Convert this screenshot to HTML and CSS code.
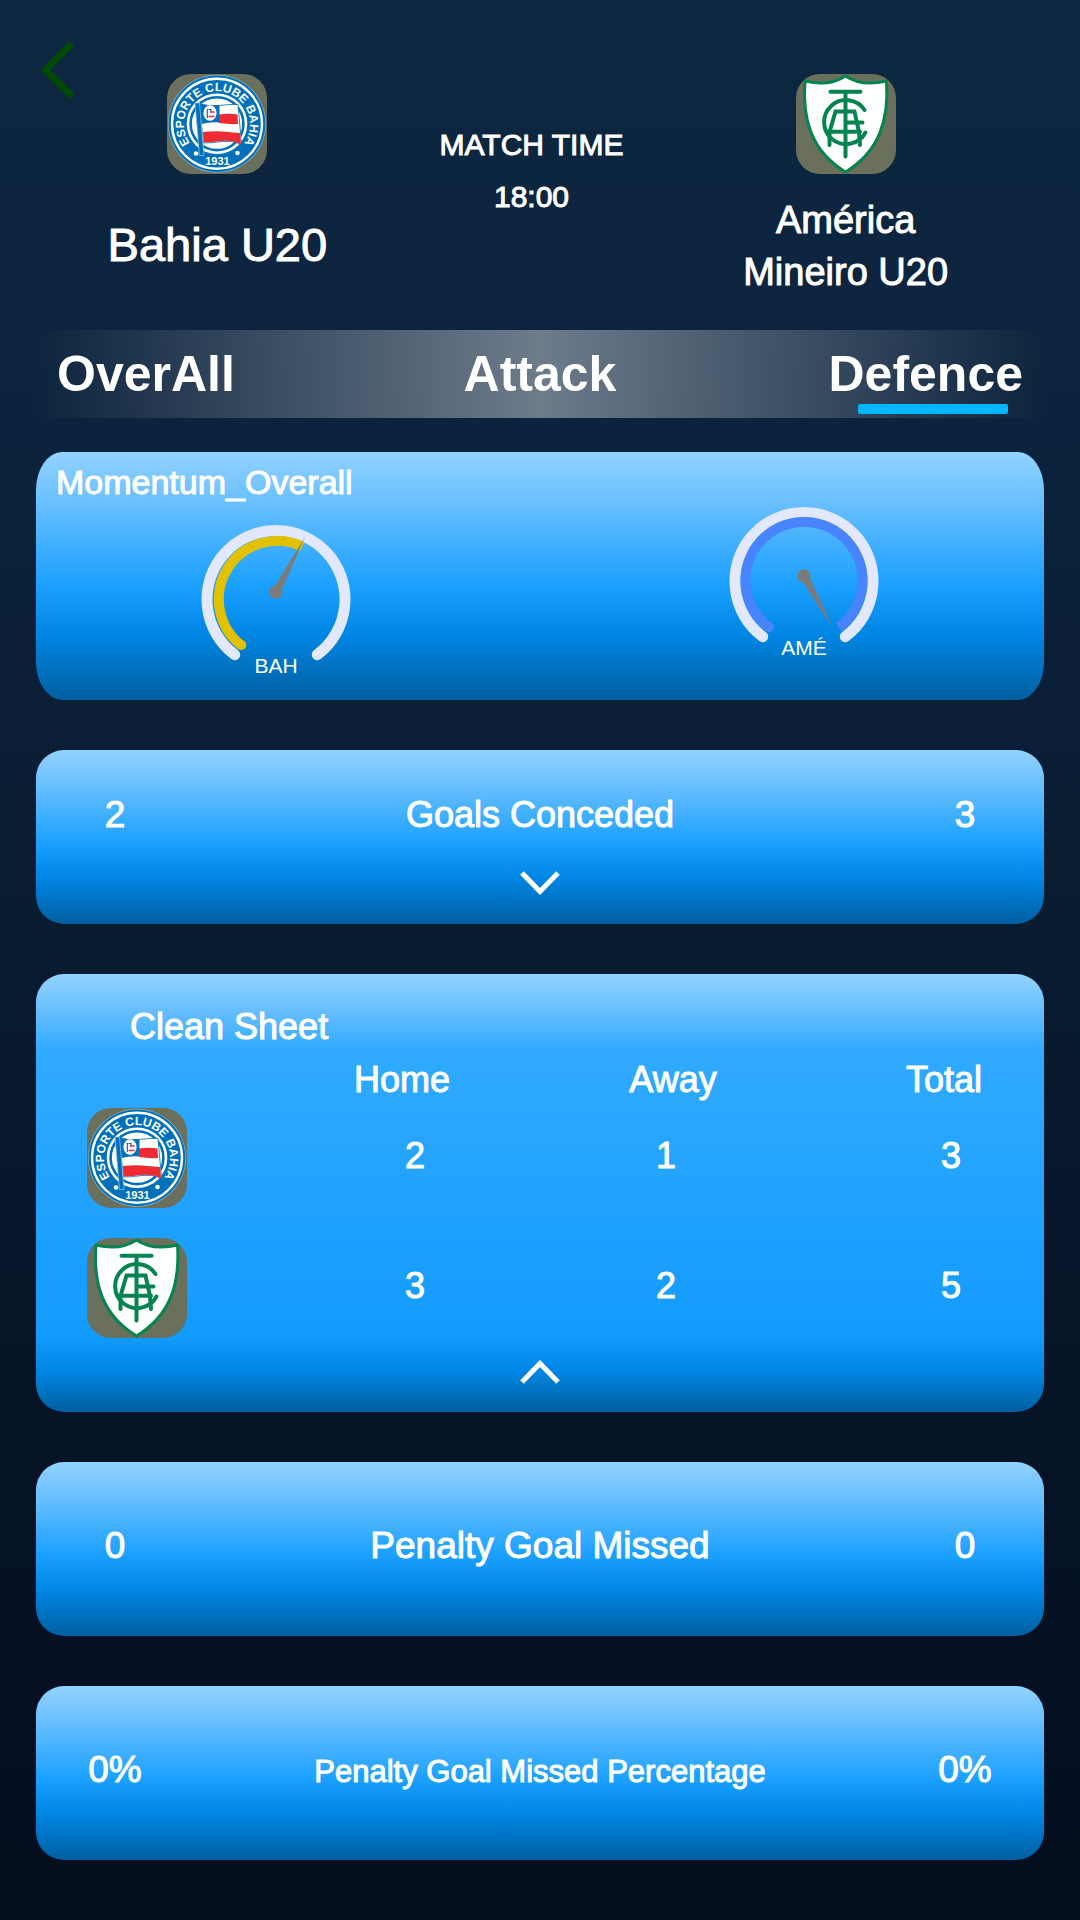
FILE: index.html
```html
<!DOCTYPE html>
<html lang="en">
<head>
<meta charset="utf-8">
<meta name="viewport" content="width=device-width, initial-scale=1">
<title>Bahia U20 – América Mineiro U20</title>
<link rel="stylesheet" href="styles.css">
</head>
<body>
<header class="match">
  <button class="back" type="button" aria-label="Back">
    <svg viewBox="0 0 40 60"><path d="M36 3.500L9.500 30L36 56.500"/></svg>
  </button>
  <div class="team">
    <svg class="crest" viewBox="0 0 100 100" role="img" aria-label="Bahia crest">
      <g id="crest-bahia">
        <path id="motto" d="M20.700 69.500A35 35 0 1 1 79.300 69.500" fill="none"/>
        <circle cx="50" cy="49.700" r="49" fill="#8fb2c6"/>
        <circle cx="50" cy="49.700" r="48.300" fill="#0070bb"/>
        <circle cx="50" cy="49.700" r="45" fill="none" stroke="#fff" stroke-width="2.400"/>
        <circle cx="50" cy="49.700" r="30.300" fill="#fff"/>
        <circle cx="50" cy="49.700" r="26.400" fill="none" stroke="#0070bb" stroke-width="2.600"/>
        <path id="motto-baseline" d="M23 69.200A33 33 0 1 1 77 69.200" fill="none"/>
        <text class="crest-text" font-size="12" text-anchor="middle"><textPath href="#motto-baseline" startOffset="50%">ESPORTE CLUBE BAHIA</textPath></text>
        <text class="crest-text" font-size="11" x="50.500" y="90.500" text-anchor="middle">1931</text>
        <circle cx="29" cy="79.500" r="2.300" fill="#fff"/>
        <circle cx="70.500" cy="79" r="2.300" fill="#fff"/>
        <path d="M32 29.500Q42 33 52 31.500T71 30.500L74.500 70Q64 66 55 67.500T36.500 69Z" fill="#fff" stroke="#0070bb" stroke-width=".8"/>
        <path d="M52 40.500Q62 39 70.500 40.500L71 50Q62 50.500 52 49Z" fill="#ee2b33"/>
        <path d="M36 58Q47 57 55 57.500T73 59L74 70Q64 66 55 67T36.500 68.500Z" fill="#ee2b33"/>
        <path d="M32 29.500Q42 32.500 52.500 31V48.500Q44 47.500 34.500 50Z" fill="#0070bb"/>
        <ellipse cx="43" cy="39" rx="6.600" ry="7.800" fill="#fff"/>
        <path d="M40.300 35v9M41.500 35.500h2.500v3" fill="none" stroke="#0070bb" stroke-width="1.200"/>
        <path d="M43 38h4.500M41.500 42.500h6" stroke="#ee2b33" stroke-width="1.700"/>
        <path d="M28 29h4.500l4.500 52.500h-4.500Z" fill="#0070bb" stroke="#9cc6e2" stroke-width=".7"/>
      </g>
    </svg>
    <h1 class="team-name team-name-large">Bahia U20</h1>
  </div>
  <div class="kickoff">
    <p>MATCH TIME</p>
    <p>18:00</p>
  </div>
  <div class="team">
    <svg class="crest" viewBox="0 0 100 100" role="img" aria-label="América Mineiro crest">
      <g id="crest-america">
        <path d="M49.500 2Q33 13 9 7C6 45 15 77 49.500 98C84 77 93 45 90.500 7Q66 13 49.500 2Z" fill="#fff" stroke="#04854f" stroke-width="3"/>
        <g fill="none" stroke="#04854f" stroke-width="4" stroke-linecap="round">
          <path d="M34.500 17.800H64.500M49.500 17.800V82.500M49.500 48.500H66.500M34 57.800H64"/>
          <path d="M68.500 36A22 22 0 1 0 69.500 58.500"/>
          <path d="M33.500 71V58L39.500 37.500H58.500L63 58L64 71"/>
        </g>
      </g>
    </svg>
    <h1 class="team-name">América<br>Mineiro U20</h1>
  </div>
</header>

<nav class="tabs">
  <button class="tab" type="button">OverAll</button>
  <button class="tab" type="button">Attack</button>
  <button class="tab tab-active" type="button">Defence</button>
</nav>

<main class="cards">
  <section class="card card-momentum">
    <h2 class="momentum-title">Momentum_Overall</h2>
    <div class="gauges">
      <figure class="gauge gauge-home">
        <svg viewBox="0 0 150 130">
          <linearGradient id="needle-home" gradientUnits="userSpaceOnUse" x1="75" y1="68" x2="105" y2="12">
            <stop offset=".7" stop-color="#7b7b7b"/><stop offset="1" stop-color="#7b7b7b" stop-opacity=".3"/>
          </linearGradient>
          <path class="track" d="M33.700 130.700A69 69 0 1 1 116.300 130.700"/>
          <path class="level" d="M40.300 121.500A58.500 58.500 0 0 1 101.300 22.500"/>
          <circle class="level-cap" cx="40.300" cy="121" r="5"/>
          <path d="M71.500 66L105 11L79 70Z" fill="url(#needle-home)"/>
          <circle class="hub" cx="75" cy="68" r="6.700"/>
        </svg>
        <figcaption>BAH</figcaption>
      </figure>
      <figure class="gauge gauge-away">
        <svg viewBox="0 0 150 130">
          <linearGradient id="needle-away" gradientUnits="userSpaceOnUse" x1="75" y1="70" x2="105" y2="124">
            <stop offset=".7" stop-color="#7b7b7b"/><stop offset="1" stop-color="#7b7b7b" stop-opacity=".3"/>
          </linearGradient>
          <path class="track" d="M33.700 130.700A69 69 0 1 1 116.300 130.700"/>
          <path class="level" d="M40.300 121.500A58.500 58.500 0 1 1 109.700 121.500"/>
          <circle class="level-cap" cx="40.300" cy="121" r="5"/>
          <path d="M71.500 72L106 126L79 68Z" fill="url(#needle-away)"/>
          <circle class="hub" cx="75" cy="70" r="6.700"/>
        </svg>
        <figcaption>AMÉ</figcaption>
      </figure>
    </div>
  </section>

  <section class="card card-open">
    <div class="stat">
      <span>2</span><h2 class="stat-name stat-name-medium">Goals Conceded</h2><span>3</span>
    </div>
    <button class="toggle" type="button" aria-label="Show details">
      <svg viewBox="0 0 40 24"><path d="M2 2L20 20.500L38 2"/></svg>
    </button>
  </section>

  <section class="card card-sheet">
    <h2 class="sheet-title">Clean Sheet</h2>
    <table class="sheet">
      <thead>
        <tr><td></td><th scope="col">Home</th><th scope="col">Away</th><th scope="col">Total</th></tr>
      </thead>
      <tbody>
        <tr>
          <th scope="row"><svg class="crest" viewBox="0 0 100 100" role="img" aria-label="Bahia crest"><use href="#crest-bahia"/></svg></th>
          <td>2</td><td>1</td><td>3</td>
        </tr>
        <tr>
          <th scope="row"><svg class="crest" viewBox="0 0 100 100" role="img" aria-label="América Mineiro crest"><use href="#crest-america"/></svg></th>
          <td>3</td><td>2</td><td>5</td>
        </tr>
      </tbody>
    </table>
    <button class="toggle" type="button" aria-label="Hide details">
      <svg viewBox="0 0 40 24"><path d="M2 22L20 3.500L38 22"/></svg>
    </button>
  </section>

  <section class="card card-plain">
    <div class="stat">
      <span>0</span><h2 class="stat-name">Penalty Goal Missed</h2><span>0</span>
    </div>
  </section>

  <section class="card card-plain">
    <div class="stat">
      <span>0%</span><h2 class="stat-name stat-name-small">Penalty Goal Missed Percentage</h2><span>0%</span>
    </div>
  </section>
</main>
</body>
</html>
```
FILE: styles.css
```css
* {
  box-sizing: border-box;
}

html {
  min-height: 100%;
  background: linear-gradient(#0e2841, #0c233d 22%, #091b30 50%, #061326 75%, #051123 88%, #030f1e);
}

body {
  margin: 0;
  padding-bottom: 60px;
  font-family: "Liberation Sans", Arial, sans-serif;
  color: #fff;
}

h1,
h2,
p,
figure {
  margin: 0;
  font-weight: 400;
}

button {
  padding: 0;
  border: 0;
  background: none;
  color: inherit;
  font-family: inherit;
  cursor: pointer;
}

svg {
  display: block;
}

.crest {
  width: 100px;
  height: 100px;
  border-radius: 24px;
  background: #6a705b;
  -webkit-text-stroke: 0;
}

.crest-text {
  fill: #fff;
  font-family: "Liberation Sans", Arial, sans-serif;
  font-weight: 700;
}

/* Match header */
.match {
  display: grid;
  grid-template-columns: 40px 9fr 11fr 9fr;
  align-items: start;
  padding: 40px 93px 32px 36px;
}

.back svg {
  width: 40px;
  height: 60px;
}

.back path {
  fill: none;
  stroke: #004a05;
  stroke-width: 7;
}

.team {
  display: flex;
  flex-direction: column;
  align-items: center;
  gap: 20px;
  padding-top: 34px;
}

.team-name {
  display: flex;
  align-items: center;
  min-height: 104px;
  font-size: 38px;
  line-height: 52px;
  text-align: center;
  -webkit-text-stroke: 1px;
}

.team-name-large {
  padding-bottom: 3px;
  font-size: 47px;
}

.kickoff {
  padding-top: 79px;
  font-size: 30px;
  line-height: 52px;
  text-align: center;
  -webkit-text-stroke: 1px;
}

/* Tabs */
.tabs {
  display: grid;
  grid-template-columns: 1fr auto 1fr;
  padding: 0 57px;
  background: linear-gradient(90deg, transparent 3%, rgba(255, 255, 255, 0.4) 50%, transparent 97%);
}

.tab {
  position: relative;
  justify-self: start;
  font-size: 50px;
  font-weight: 700;
  line-height: 88px;
}

.tab-active {
  justify-self: end;
}

.tab-active::after {
  content: "";
  position: absolute;
  right: 15px;
  bottom: 4px;
  width: 150px;
  height: 10px;
  border-radius: 2px;
  background: #00b7ff;
}

/* Cards */
.cards {
  display: flex;
  flex-direction: column;
  gap: 50px;
  padding: 34px 36px 0;
}

.card {
  border-radius: 28px;
  background: linear-gradient(#93d2ff, #67bfff 21%, #1aa0ff 54%, #0087e6 73%, #005fa0);
}

.card-momentum {
  padding: 10px 20px 22px;
  border-radius: 26px / 38px;
}

.momentum-title {
  font-size: 34px;
  line-height: 40px;
  -webkit-text-stroke: 1px;
}

.gauges {
  display: flex;
  justify-content: space-between;
  align-items: flex-start;
  padding: 4px 145px 0;
}

.gauge {
  width: 150px;
}

.gauge-home {
  padding-top: 18px;
}

.gauge svg {
  width: 100%;
  overflow: visible;
}

.gauge figcaption {
  font-size: 21px;
  line-height: 24px;
  text-align: center;
}

.track,
.level {
  fill: none;
}

.track {
  stroke: #e2e8ff;
  stroke-width: 11;
  stroke-linecap: round;
}

.level {
  stroke-width: 10;
}

.gauge-home .level {
  stroke: #e2c100;
}

.gauge-home .level-cap {
  fill: #e2c100;
}

.gauge-away .level {
  stroke: #4984ff;
}

.gauge-away .level-cap {
  fill: #4984ff;
}

.hub {
  fill: #7b7b7b;
}

.card-open {
  padding: 43px 0 21px;
}

.card-plain {
  padding: 62px 0 68px;
}

.stat {
  display: grid;
  grid-template-columns: 158px 1fr 158px;
  align-items: baseline;
  font-size: 37px;
  line-height: 44px;
  text-align: center;
  -webkit-text-stroke: 1px;
}

.stat-name {
  font-size: inherit;
}

.stat-name-medium {
  font-size: 36px;
  line-height: 42px;
}

.stat-name-small {
  font-size: 31px;
  line-height: 40px;
}

.toggle {
  display: block;
  margin: 26px auto 0;
  padding: 8px;
}

.toggle svg {
  width: 40px;
  height: 24px;
}

.toggle path {
  fill: none;
  stroke: #fff;
  stroke-width: 5;
}

/* Clean sheet */
.card-sheet {
  padding: 31px 0 20px;
  background: linear-gradient(#93d2ff, #67bfff 36px, #31aaff 76px, #129bfe calc(100% - 74px), #0087e6 calc(100% - 42px), #005fa0);
}

.card-sheet .toggle {
  margin-top: 14px;
}

.sheet-title {
  padding-left: 94px;
  font-size: 36px;
  line-height: 44px;
  -webkit-text-stroke: 1px;
}

.sheet {
  width: 100%;
  table-layout: fixed;
  border-collapse: collapse;
  font-size: 36px;
  line-height: 44px;
  text-align: center;
  -webkit-text-stroke: 1px;
}

.sheet th {
  font-weight: 400;
}

.sheet thead th {
  width: 26%;
  padding: 9px 14px 6px 0;
}

.sheet thead th:nth-child(3) {
  padding-left: 18px;
}

.sheet thead th:last-child {
  width: 24%;
  padding-left: 56px;
}

.sheet thead td {
  width: 24%;
}

.sheet tbody th {
  padding: 0 0 30px 51px;
}

.sheet tbody td {
  padding: 0 0 34px 12px;
}

.sheet tbody td:nth-child(3) {
  padding-left: 0;
  padding-right: 10px;
}

.sheet tbody td:last-child {
  padding-left: 56px;
}

.sheet tbody tr:last-child th {
  padding-bottom: 0;
}

.sheet tbody tr:last-child td {
  padding-bottom: 4px;
}
```
